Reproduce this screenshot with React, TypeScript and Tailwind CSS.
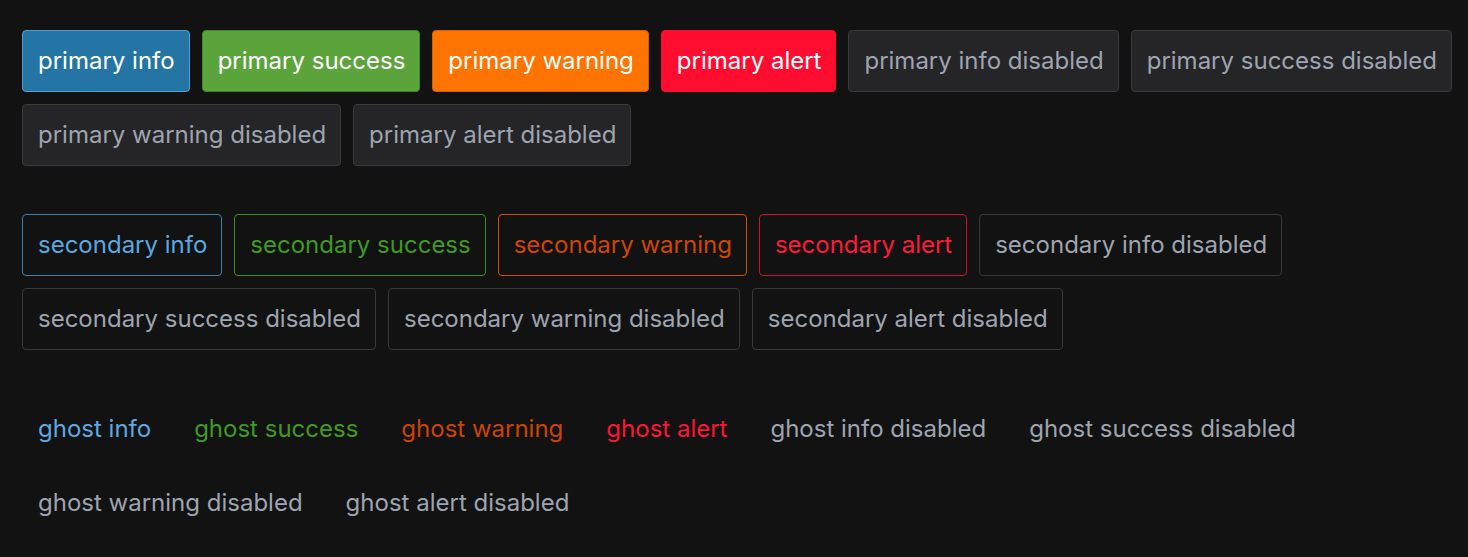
type Variant = 'primary' | 'secondary' | 'ghost';
type Tone = 'info' | 'success' | 'warning' | 'alert';

const styles: Record<Variant, Record<Tone, string>> = {
  primary: {
    info: 'bg-[#2475a4] border-[#4f9fd6] text-white',
    success: 'bg-[#5ba43b] border-[#3f8a26] text-white',
    warning: 'bg-[#ff7300] border-[#d85f00] text-white',
    alert: 'bg-[#ff0d31] border-[#ff0d31] text-white',
  },
  secondary: {
    info: 'bg-transparent border-[#3e7daa] text-[#5aa8e0]',
    success: 'bg-transparent border-[#3b8f1f] text-[#3f9a1f]',
    warning: 'bg-transparent border-[#d44e00] text-[#cf4600]',
    alert: 'bg-transparent border-[#c8102e] text-[#ff1a3b]',
  },
  ghost: {
    info: 'bg-transparent border-transparent text-[#5ea9e2]',
    success: 'bg-transparent border-transparent text-[#409a20]',
    warning: 'bg-transparent border-transparent text-[#cc4400]',
    alert: 'bg-transparent border-transparent text-[#ff1436]',
  },
};

const disabledStyles: Record<Variant, string> = {
  primary: 'bg-[#252527] border-[#3a3a3c] text-[#9ea4b0]',
  secondary: 'bg-transparent border-[#38383a] text-[#9ea4b0]',
  ghost: 'bg-transparent border-transparent text-[#9ea4b0]',
};

const tones: Tone[] = ['info', 'success', 'warning', 'alert'];

function Btn({ variant, tone, disabled }: { variant: Variant; tone: Tone; disabled?: boolean }) {
  const cls = disabled ? disabledStyles[variant] : styles[variant][tone];
  return (
    <button
      className={`h-[62px] pl-[15px] pr-[14px] rounded-[4px] border text-[24px] leading-none whitespace-nowrap ${cls}`}
    >
      {variant} {tone}
      {disabled ? ' disabled' : ''}
    </button>
  );
}

function Section({ variant }: { variant: Variant }) {
  return (
    <div className="flex flex-wrap gap-3">
      {tones.map((t) => (
        <Btn key={t} variant={variant} tone={t} />
      ))}
      {tones.map((t) => (
        <Btn key={`${t}-d`} variant={variant} tone={t} disabled />
      ))}
    </div>
  );
}

export default function App() {
  return (
    <div
      className="w-[1468px] h-[557px] bg-[#121212] pl-[22px] pr-[10px] pt-[30px] flex flex-col gap-12"
      style={{ fontFamily: 'Inter, "Noto Sans", sans-serif' }}
    >
      <Section variant="primary" />
      <Section variant="secondary" />
      <Section variant="ghost" />
    </div>
  );
}
